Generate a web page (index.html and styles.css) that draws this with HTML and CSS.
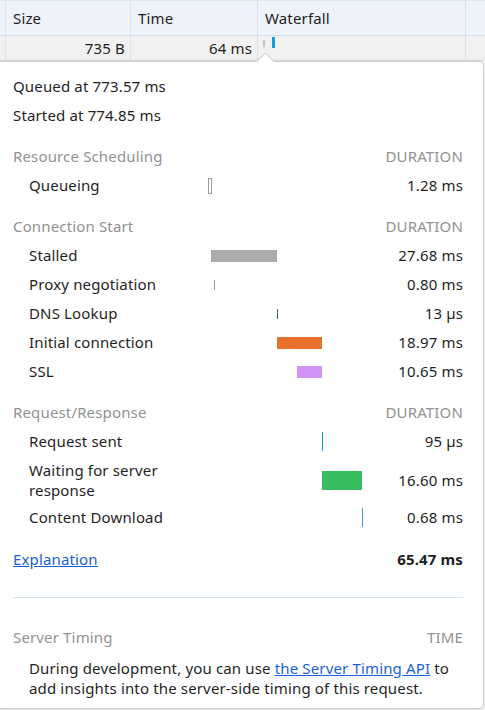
FILE: index.html
```html
<!DOCTYPE html>
<html>
<head>
<meta charset="utf-8">
<link rel="stylesheet" href="styles.css">
</head>
<body>
<div class="table">
  <div class="thead">
    <div class="cell c0"></div>
    <div class="cell c1">Size</div>
    <div class="cell c2">Time</div>
    <div class="cell c3">Waterfall</div>
    <div class="cell c4"><span class="sortmark"></span></div>
  </div>
  <div class="trow">
    <div class="cell c0"></div>
    <div class="cell c1 num">735 B</div>
    <div class="cell c2 num">64 ms</div>
    <div class="cell c3 wf"><span class="wf-q"></span><span class="wf-b"></span></div>
    <div class="cell c4"></div>
  </div>
</div>

<div class="popover">
  <div class="arrow"></div>
  <div class="line">Queued at 773.57 ms</div>
  <div class="line">Started at 774.85 ms</div>

  <div class="sec">
    <div class="sec-title">Resource Scheduling</div>
    <div class="sec-col">DURATION</div>
  </div>
  <div class="row">
    <div class="lbl">Queueing</div>
    <div class="track"><span class="bar queue" style="margin-left:0px;width:4px"></span></div>
    <div class="val">1.28 ms</div>
  </div>

  <div class="sec">
    <div class="sec-title">Connection Start</div>
    <div class="sec-col">DURATION</div>
  </div>
  <div class="row">
    <div class="lbl">Stalled</div>
    <div class="track"><span class="bar stalled" style="margin-left:3px;width:66px"></span></div>
    <div class="val">27.68 ms</div>
  </div>
  <div class="row">
    <div class="lbl">Proxy negotiation</div>
    <div class="track"><span class="bar proxy" style="margin-left:6px;width:1px"></span></div>
    <div class="val">0.80 ms</div>
  </div>
  <div class="row">
    <div class="lbl">DNS Lookup</div>
    <div class="track"><span class="bar dns" style="margin-left:69px;width:1px"></span></div>
    <div class="val">13 µs</div>
  </div>
  <div class="row">
    <div class="lbl">Initial connection</div>
    <div class="track"><span class="bar conn" style="margin-left:69px;width:45px"></span></div>
    <div class="val">18.97 ms</div>
  </div>
  <div class="row">
    <div class="lbl">SSL</div>
    <div class="track"><span class="bar ssl" style="margin-left:89px;width:25px"></span></div>
    <div class="val">10.65 ms</div>
  </div>

  <div class="sec">
    <div class="sec-title">Request/Response</div>
    <div class="sec-col">DURATION</div>
  </div>
  <div class="row">
    <div class="lbl">Request sent</div>
    <div class="track"><span class="bar sent" style="margin-left:114px;width:1px"></span></div>
    <div class="val">95 µs</div>
  </div>
  <div class="row tall">
    <div class="lbl">Waiting for server<br>response</div>
    <div class="track"><span class="bar wait" style="margin-left:114px;width:40px"></span></div>
    <div class="val">16.60 ms</div>
  </div>
  <div class="row">
    <div class="lbl">Content Download</div>
    <div class="track"><span class="bar dl" style="margin-left:154px;width:1px"></span></div>
    <div class="val">0.68 ms</div>
  </div>

  <div class="total">
    <a class="link" href="#">Explanation</a>
    <div class="total-val">65.47 ms</div>
  </div>

  <div class="divider"></div>

  <div class="sec server">
    <div class="sec-title">Server Timing</div>
    <div class="sec-col">TIME</div>
  </div>
  <p class="note">During development, you can use <a class="link" href="#">the Server Timing API</a> to add insights into the server-side timing of this request.</p>
</div>
</body>
</html>
```

FILE: styles.css
```css
* { box-sizing: border-box; }
html, body {
  margin: 0;
  padding: 0;
  background: #ffffff;
  width: 485px;
  height: 710px;
  overflow: hidden;
}
body {
  font-family: "Noto Sans", "Open Sans", sans-serif;
  font-size: 15px;
  letter-spacing: 0.15px;
  color: #1f1f1f;
  position: relative;
}

.table {
  border-top: 1px solid #dbe5f5;
}
.thead, .trow {
  display: grid;
  grid-template-columns: 6px 125px 127px 208px 19px;
}
.thead {
  height: 35px;
  background: #eef2f9;
  border-bottom: 1px solid #d3dff3;
}
.trow {
  height: 25px;
  background: #f1f1f1;
  border-bottom: 1px solid #e3e3e3;
}
.cell {
  border-right: 1px solid #d6e1f4;
  padding: 0 6px;
  display: flex;
  align-items: center;
  white-space: nowrap;
  overflow: hidden;
}
.c4 { border-right: none; }
.thead .cell { padding-left: 7px; }
.thead .c0 { padding: 0; }
.num { justify-content: flex-end; padding-right: 5px; }
.trow .c0 { padding: 0; }
.wf { padding-left: 5px; gap: 7px; align-items: flex-start; padding-top: 1px; }
.wf-q { width: 2px; height: 7px; background: #c8c8c8; margin-top: 3px; }
.wf-b { width: 3px; height: 11px; background: #1a98e6; }
.sortmark { display: block; width: 3px; height: 1px; background: #777; margin-left: 12px; }

.popover {
  position: absolute;
  left: -4px;
  top: 61px;
  width: 488px;
  height: 648px;
  background: #fff;
  border: 1px solid #cfcfcf;
  border-radius: 4px;
  box-shadow: 0 1px 4px rgba(0,0,0,0.18);
  padding: 10px 20px 0 16px;
}
.arrow {
  position: absolute;
  left: 262px;
  top: -7px;
  width: 13px;
  height: 13px;
  background: #fff;
  border-left: 1px solid #cfcfcf;
  border-top: 1px solid #cfcfcf;
  transform: rotate(45deg);
}

.line {
  line-height: 29px;
}

.sec {
  display: flex;
  justify-content: space-between;
  margin-top: 12px;
  line-height: 29px;
  color: #929292;
}

.row {
  display: grid;
  grid-template-columns: 195px 156px 1fr;
  align-items: center;
  padding: 4px 0;
  line-height: 21px;
}
.row.tall { line-height: 20px; padding: 4px 0 3px; }
.lbl { padding-left: 16px; white-space: nowrap; }
.val { text-align: right; }
.track {
  display: flex;
  align-items: center;
  height: 20px;
}
.bar { display: block; flex: none; }
.queue { height: 16px; border: 1px solid #9a9a9a; background: #fff; }
.stalled { height: 12px; background: #aaaaaa; }
.proxy { height: 10px; background: #999; }
.dns { height: 10px; background: #2c6f7e; }
.conn { height: 12px; background: #e8702f; }
.ssl { height: 12px; background: #d291f7; }
.sent { height: 19px; background: #0ea0cf; }
.wait { height: 19px; background: #37bd5d; }
.dl { height: 19px; background: #4a8ff0; }

.total {
  display: flex;
  justify-content: space-between;
  align-items: center;
  margin-top: 17px;
  line-height: 20px;
}
.total-val { font-weight: bold; }
.link {
  color: #1a5fd6;
  text-decoration: underline;
}

.divider {
  height: 1px;
  background: #d3e3fb;
  margin-top: 28px;
}
.server { margin-top: 25px; }
.note {
  margin: 6px 0 0;
  padding-left: 16px;
  line-height: 20px;
}
```
